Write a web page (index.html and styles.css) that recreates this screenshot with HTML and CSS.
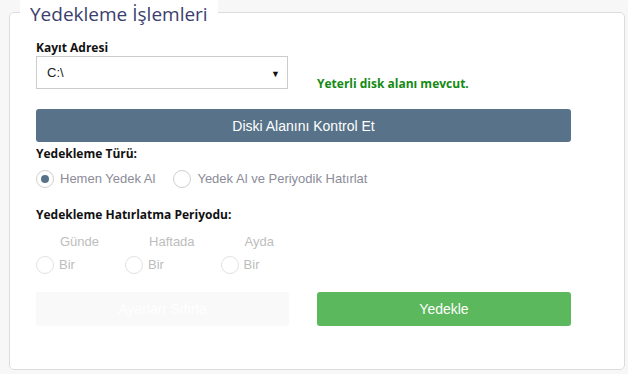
FILE: index.html
```html
<!DOCTYPE html>
<html>
<head>
  <meta charset="UTF-8">
  <title>Yedekleme İşlemleri</title>
  <link rel="stylesheet" href="styles.css">
</head>
<body>

<fieldset class="panel">
  <legend>Yedekleme İşlemleri</legend>

  <div class="form">
    <div class="label">Kayıt Adresi</div>
    <div class="two-col">
      <div class="select-wrap">
        <select class="select">
          <option>C:\</option>
        </select>
      </div>
      <div class="status">Yeterli disk alanı mevcut.</div>
    </div>

    <button class="btn btn-check">Diski Alanını Kontrol Et</button>

    <div class="label label-type">Yedekleme Türü:</div>
    <div class="radio-row">
      <label class="radio"><input type="radio" name="type" checked> Hemen Yedek Al</label>
      <label class="radio"><input type="radio" name="type"> Yedek Al ve Periyodik Hatırlat</label>
    </div>

    <div class="label label-period">Yedekleme Hatırlatma Periyodu:</div>
    <div class="period-row">
      <div class="period">
        <div class="period-name">Günde</div>
        <label class="radio off"><input type="radio" name="period" disabled> Bir</label>
      </div>
      <div class="period">
        <div class="period-name">Haftada</div>
        <label class="radio off"><input type="radio" name="period" disabled> Bir</label>
      </div>
      <div class="period">
        <div class="period-name">Ayda</div>
        <label class="radio off"><input type="radio" name="period" disabled> Bir</label>
      </div>
    </div>

    <div class="two-col actions">
      <button class="btn btn-reset" disabled>Ayarları Sıfırla</button>
      <button class="btn btn-save">Yedekle</button>
    </div>
  </div>
</fieldset>

</body>
</html>
```

FILE: styles.css
```css
html, body {
  margin: 0;
  background: #f7f7f7;
}
body {
  padding: 0 3px 0 9px;
  font-family: 'Open Sans', sans-serif;
}
.panel {
  margin: 0;
  width: 616px;
  height: 370px;
  box-sizing: border-box;
  border: 1px solid #dcdce0;
  border-radius: 5px;
  background: #fff;
  padding: 0 10px;
}
.panel legend {
  background: #fff;
  padding: 3px 10px 0;
  font-size: 19px;
  line-height: 22px;
  color: #3b3e6d;
}
.form {
  margin-left: 16px;
  width: 535px;
}
.label {
  font-size: 12px;
  font-weight: bold;
  line-height: 18px;
  color: #111;
  margin-top: 14px;
}
.two-col {
  display: grid;
  grid-template-columns: 253px 254px;
  column-gap: 28px;
}
.select-wrap {
  position: relative;
  width: 252px;
  margin-top: -1px;
}
.select {
  appearance: none;
  width: 100%;
  height: 33px;
  border: 1px solid #ccc;
  background: #fff;
  padding: 0 10px;
  font-family: 'Liberation Sans', Arial, sans-serif;
  font-size: 13px;
  color: #222;
  border-radius: 0;
}
.select-wrap::after {
  content: "▼";
  position: absolute;
  right: 8px;
  top: 11px;
  font-size: 9px;
  color: #111;
  pointer-events: none;
}
.status {
  align-self: end;
  margin-bottom: -3px;
  font-size: 12px;
  font-weight: bold;
  line-height: 16px;
  color: #138a13;
}
.btn {
  display: block;
  width: 100%;
  border: none;
  border-radius: 3px;
  font-family: 'Liberation Sans', Arial, sans-serif;
  font-size: 14px;
  color: #fff;
  cursor: pointer;
}
.btn-check {
  margin-top: 20px;
  height: 33px;
  background: #587389;
}
.label-type {
  margin-top: 3px;
}
.radio-row {
  display: flex;
  gap: 18px;
  margin-top: 6px;
}
.radio {
  display: flex;
  align-items: center;
  gap: 6px;
  font-family: 'Liberation Sans', Arial, sans-serif;
  font-size: 13px;
  color: #8c8c99;
  line-height: 20px;
}
.radio input {
  appearance: none;
  margin: 0;
  width: 18px;
  height: 18px;
  border: 1px solid #cfcfd4;
  border-radius: 50%;
  background: #fff;
  display: grid;
  place-items: center;
}
.radio input:checked::before {
  content: "";
  width: 8px;
  height: 8px;
  border-radius: 50%;
  background: #587389;
}
.label-period {
  margin-top: 17px;
}
.period-row {
  display: flex;
  gap: 26px;
  margin-top: 9px;
}
.period-name {
  padding-left: 24px;
  font-family: 'Liberation Sans', Arial, sans-serif;
  font-size: 13px;
  line-height: 18px;
  color: #bdbdbd;
}
.radio.off {
  margin-top: 4px;
  gap: 5px;
  color: #bdbdbd;
}
.radio.off input {
  border-color: #e2e2e2;
}
.actions {
  margin-top: 17px;
}
.btn-reset {
  height: 34px;
  background: #f9f9f9;
  cursor: default;
}
.btn-save {
  height: 34px;
  background: #5cb85c;
}
```
